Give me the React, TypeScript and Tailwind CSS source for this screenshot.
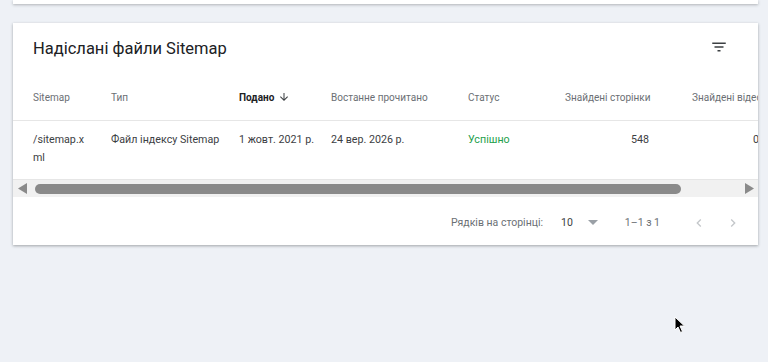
import React from "react";

const F = { fontFamily: "Roboto, 'Noto Sans', sans-serif" };

export default function App() {
  return (
    <div className="relative w-[768px] h-[362px] overflow-hidden bg-[#eef1f6]" style={F}>
      <div className="mx-[13px] w-[745px] h-[4px] bg-white shadow-[0_1px_3px_rgba(60,64,67,0.35)]" />
      <div className="mx-[13px] mt-[19px] w-[745px] bg-white shadow-[0_1px_3px_rgba(60,64,67,0.3),0_1px_2px_rgba(60,64,67,0.15)] overflow-hidden">
        {/* title */}
        <div className="flex items-center h-[51px] pl-[20px] pr-[30px] pt-[1px]">
          <div className="flex-1 text-[16.5px] text-[#202124]">Надіслані файли Sitemap</div>
          <svg width="18" height="18" viewBox="0 0 24 24" className="mt-[-4px]">
            <path d="M10 18h4v-2h-4v2zM3 6v2h18V6H3zm3 7h12v-2H6v2z" fill="#3c4043" />
          </svg>
        </div>
        {/* header */}
        <div className="flex h-[47px] items-center border-b border-[#e6e6e6] pl-[20px] text-[10px] text-[#6b6f74] whitespace-nowrap">
          <div className="w-[78px] shrink-0">Sitemap</div>
          <div className="w-[128px] shrink-0">Тип</div>
          <div className="w-[92px] shrink-0 flex items-center font-bold text-[#202124]">
            Подано
            <svg width="12" height="12" viewBox="0 0 24 24" className="ml-[4px]">
              <path d="M20 12l-1.41-1.41L13 16.17V4h-2v12.17l-5.58-5.59L4 12l8 8 8-8z" fill="#3c4043" />
            </svg>
          </div>
          <div className="w-[137px] shrink-0">Востанне прочитано</div>
          <div className="w-[97px] shrink-0">Статус</div>
          <div className="w-[84px] shrink-0 text-right">Знайдені сторінки</div>
          <div className="ml-[43px] shrink-0">Знайдені відео</div>
        </div>
        {/* data row */}
        <div className="flex h-[59px] pt-[10px] border-b border-[#e6e6e6] pl-[20px] text-[10.7px] leading-[18px] text-[#3c4043] whitespace-nowrap">
          <div className="w-[78px] shrink-0 whitespace-normal break-all pr-[20px]">/sitemap.xml</div>
          <div className="w-[128px] shrink-0">Файл індексу Sitemap</div>
          <div className="w-[92px] shrink-0">1 жовт. 2021 р.</div>
          <div className="w-[137px] shrink-0">24 вер. 2026 р.</div>
          <div className="w-[97px] shrink-0 text-[#22a04b]">Успішно</div>
          <div className="w-[84px] shrink-0 text-right">548</div>
          <div className="ml-[104px] shrink-0">0</div>
        </div>
        {/* scrollbar */}
        <div className="flex items-center h-[17px] bg-[#f1f1f1]">
          <div className="w-[17px] flex justify-center pl-[1px]">
            <svg width="9" height="11" viewBox="0 0 9 11"><path d="M9 0v11L0 5.5z" fill="#8a8a8a" /></svg>
          </div>
          <div className="ml-[5px] w-[646px] h-[10px] rounded-full bg-[#8a8a8a]" />
          <div className="flex-1" />
          <div className="w-[17px] flex justify-center pr-[1px]">
            <svg width="9" height="11" viewBox="0 0 9 11"><path d="M0 0v11l9-5.5z" fill="#8a8a8a" /></svg>
          </div>
        </div>
        {/* footer */}
        <div className="flex items-center justify-end h-[48px] pt-[3px] text-[10.5px] text-[#6b6f74] whitespace-nowrap pr-[17px]">
          <span>Рядків на сторінці:</span>
          <span className="ml-[18px] text-[#3c4043]">10</span>
          <svg width="10" height="5" viewBox="0 0 10 5" className="ml-[15px]"><path d="M0 0h10L5 5z" fill="#9aa0a6" /></svg>
          <span className="ml-[27px]">1–1 з 1</span>
          <svg width="16" height="16" viewBox="0 0 24 24" className="ml-[31px]">
            <path d="M15.41 7.41L14 6l-6 6 6 6 1.41-1.41L10.83 12z" fill="#c4c7ca" />
          </svg>
          <svg width="16" height="16" viewBox="0 0 24 24" className="ml-[18px]">
            <path d="M10 6L8.59 7.41 13.17 12l-4.58 4.59L10 18l6-6z" fill="#c4c7ca" />
          </svg>
        </div>
      </div>
      {/* mouse cursor */}
      <svg width="12" height="18" viewBox="0 0 12 18" className="absolute left-[674px] top-[316px]">
        <path d="M1 1v13l3-3 2.5 5.5 2-1L6 10h4.5z" fill="#000" stroke="#fff" strokeWidth="1" />
      </svg>
    </div>
  );
}
